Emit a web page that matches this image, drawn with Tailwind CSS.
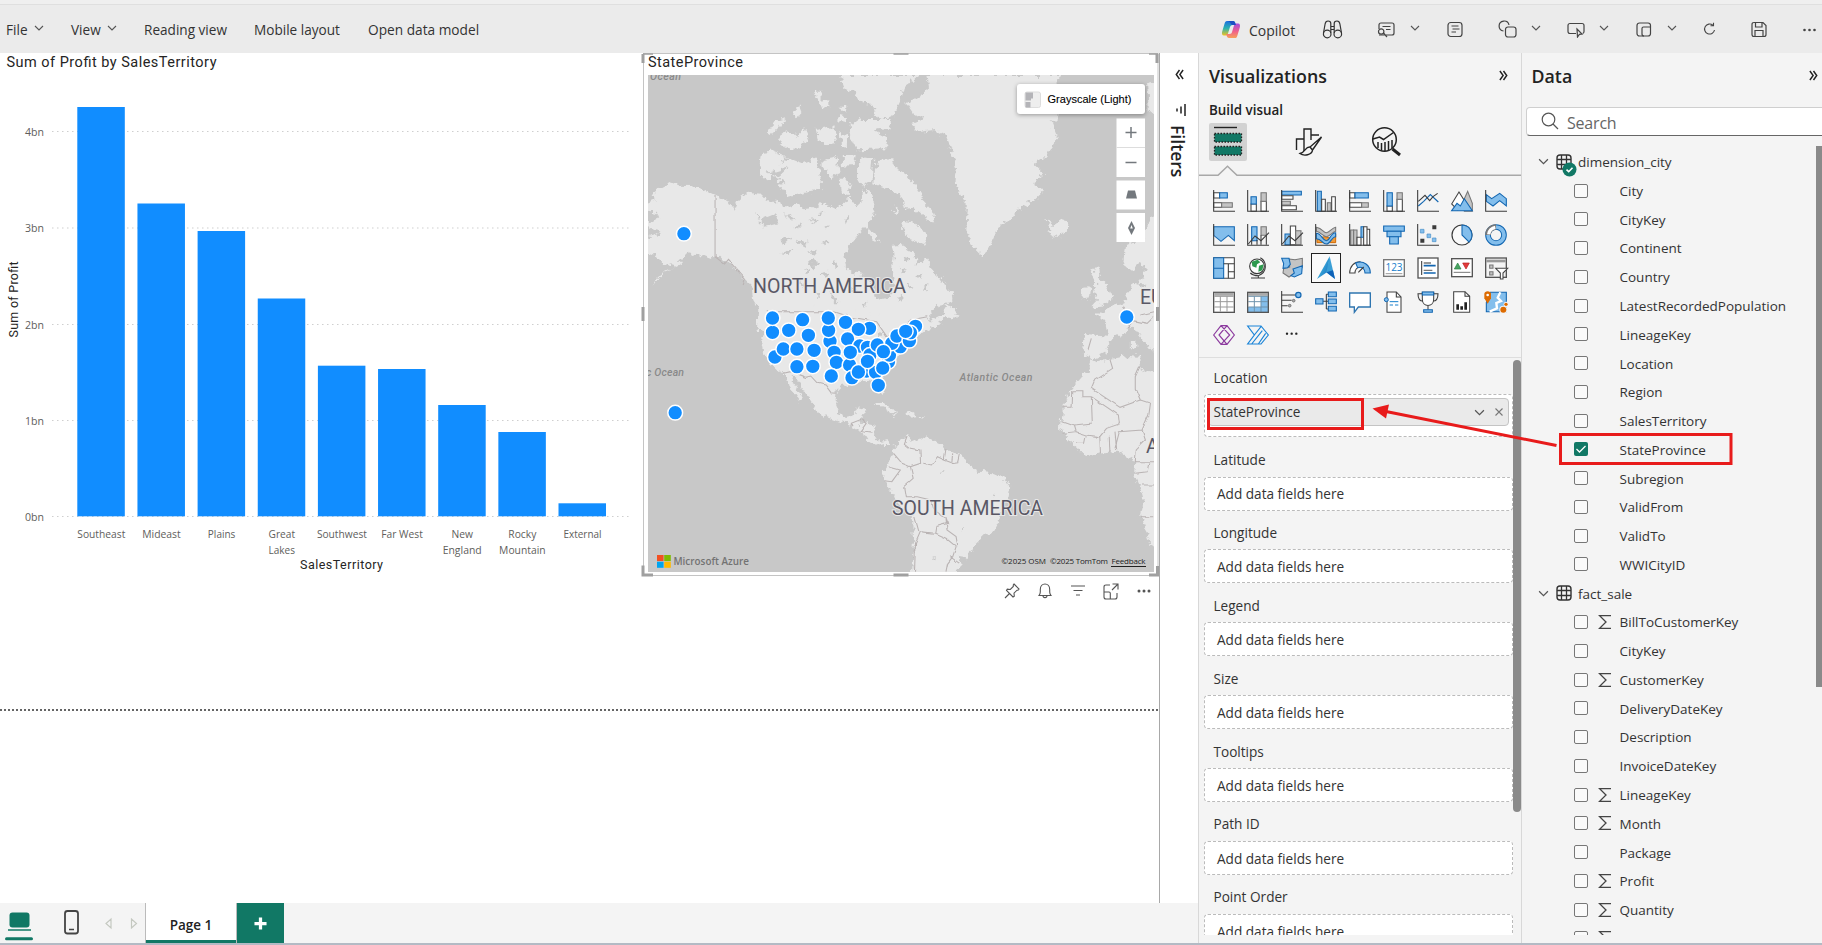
<!DOCTYPE html>
<html lang="en">
<head>
<meta charset="utf-8">
<title>Sales report</title>
<script src="https://cdn.jsdelivr.net/npm/@tailwindcss/browser@4"></script>
</head>
<body class="relative w-[1822px] h-[945px] overflow-hidden bg-white font-['Open_Sans','Noto_Sans',sans-serif] text-[13.6px] text-[#333] flex flex-col">

<!-- shared symbols -->
<svg class="hidden">
  <symbol id="chev" viewBox="0 0 10 10"><path d="M1 3l4 4 4-4" fill="none" stroke="#555" stroke-width="1.1"/></symbol>
  <symbol id="dbl" viewBox="0 0 10 12"><path d="M1 1l3.6 5L1 11M5 1l3.6 5L5 11" fill="none" stroke="#222" stroke-width="1.6"/></symbol>
  <symbol id="table" viewBox="0 0 16 16"><rect x="1" y="1" width="14" height="14" rx="3" fill="none" stroke="#333" stroke-width="1.4"/><path d="M5.5 1v14M10.5 1v14M1 5.5h14M1 10.5h14" stroke="#333" stroke-width="1.3"/></symbol>
  <symbol id="sigma" viewBox="0 0 14 16"><path d="M13 1.6H1.6L8 8l-6.400 6.400H13" fill="none" stroke="#444" stroke-width="1.3"/></symbol>
</svg>

<!-- toolbar -->
<header class="h-[53px] shrink-0 bg-[#ebebeb] flex flex-col">
  <div class="h-[5px] bg-[#efefef] border-b border-[#dfdfdf]"></div>
  <div class="flex-1 flex items-center pl-[6px] pt-[3px]">
    <div class="w-[65px] flex items-center gap-[6px]">File <svg class="size-[10px] -mt-[5px]"><use href="#chev"/></svg></div>
    <div class="w-[73px] flex items-center gap-[6px]">View <svg class="size-[10px] -mt-[5px]"><use href="#chev"/></svg></div>
    <div class="w-[110px]">Reading view</div>
    <div class="w-[114px]">Mobile layout</div>
    <div class="w-[130px] text-[13.7px]">Open data model</div>
    <div class="flex-1"></div>
    <div class="w-[601px] flex items-center">
      <svg class="w-[20px] h-[19px] -mt-[3px] shrink-0" viewBox="0 0 20 19">
        <defs><linearGradient id="ca" x1="0" y1="0" x2="0" y2="1"><stop offset="0" stop-color="#1a6fe0"/><stop offset=".5" stop-color="#2bb3b0"/><stop offset="1" stop-color="#f4c21c"/></linearGradient><linearGradient id="cb" x1="0" y1="0" x2="0" y2="1"><stop offset="0" stop-color="#a34be0"/><stop offset=".55" stop-color="#f0608a"/><stop offset="1" stop-color="#f7a05a"/></linearGradient></defs>
        <path d="M6 1h6c1.500 0 2 1 2.400 2.400L15 5H11.500C10 5 9.300 6 8.900 7.300L7 13.500C6.500 15 5.800 15.600 4.500 15.600H3C1 15.600.6 13.600 1.200 11.600L3.600 3.600C4.100 2 4.600 1 6 1z" fill="url(#ca)"/>
        <path d="M14 18H8c-1.500 0-2-1-2.400-2.400L5 14h3.500c1.500 0 2.200-1 2.600-2.300L13 5.500C13.500 4 14.200 3.400 15.500 3.400H17c2 0 2.400 2 1.800 4l-2.400 8C15.900 17 15.400 18 14 18z" fill="url(#cb)"/>
        <path d="M7 1h5c1.500 0 2 1 2.400 2.400L15 5H11.500C10 5 9.500 3 9 2.200z" fill="#1c4fc4"/>
      </svg>
      <span class="ml-[8px] w-[73px] text-[14px]">Copilot</span>
      <svg class="w-[21px] h-[19px] -mt-[3px] shrink-0" viewBox="0 0 20 19" fill="none" stroke="#333" stroke-width="1.200"><circle cx="4.700" cy="14" r="3.800"/><circle cx="15.300" cy="14" r="3.800"/><path d="M1 13L2.600 4C3 1.500 4 1 5.500 1S8.300 2 8.300 3.500V13M19 13L17.400 4C17 1.500 16 1 14.500 1S11.700 2 11.700 3.500V13M8.400 6.500h3.200M8.400 9.500h3.200"/></svg>
      <svg class="ml-[34px] w-[18px] h-[17px] -mt-[3px] shrink-0" viewBox="0 0 18 17" fill="none" stroke="#444" stroke-width="1.200"><path d="M2 8V4C2 2.800 2.800 2 4 2h11c1.200 0 2 .8 2 2v8c0 1.200-.8 2-2 2H9M5.500 5.500h8M9 8.500h4.500"/><circle cx="4.200" cy="10.500" r="2.700"/><path d="M2 14h6l-1.500-2 3.500 4"/></svg>
      <svg class="ml-[15px] size-[10px] -mt-[5px] shrink-0"><use href="#chev"/></svg>
      <svg class="ml-[27px] w-[16px] h-[17px] -mt-[3px] shrink-0" viewBox="0 0 16 17" fill="none" stroke="#444" stroke-width="1.200"><rect x="1" y="1.500" width="14" height="14" rx="2.800"/><path d="M4.500 5h7M5.500 8h7M4.500 11h4.500"/></svg>
      <svg class="ml-[35px] w-[19px] h-[18px] -mt-[3px] shrink-0" viewBox="0 0 19 18" fill="none" stroke="#444" stroke-width="1.200"><path d="M5.500 11A5 5 0 1 1 11 5"/><rect x="7.500" y="7" width="10.500" height="10" rx="2.500"/></svg>
      <svg class="ml-[14px] size-[10px] -mt-[5px] shrink-0"><use href="#chev"/></svg>
      <svg class="ml-[26px] w-[18px] h-[16px] -mt-[2px] shrink-0" viewBox="0 0 18 16" fill="none" stroke="#444" stroke-width="1.200"><path d="M9 11.500H3C1.800 11.500 1 10.800 1 9.500V3.500C1 2.300 1.800 1.500 3 1.500h12c1.300 0 2 .8 2 2v6c0 1-.5 1.700-1.300 2"/><path d="M10 7l5 5-2.600.4L10.500 15z"/></svg>
      <svg class="ml-[14px] size-[10px] -mt-[5px] shrink-0"><use href="#chev"/></svg>
      <svg class="ml-[27px] w-[16px] h-[15px] -mt-[3px] shrink-0" viewBox="0 0 16 15" fill="none" stroke="#444" stroke-width="1.200"><rect x="1" y="1" width="13.500" height="13" rx="2.500"/><path d="M14.500 5H7.500C6.500 5 6 5.500 6 6.500V12c0 1.300.7 2 2 2"/></svg>
      <svg class="ml-[15px] size-[10px] -mt-[5px] shrink-0"><use href="#chev"/></svg>
      <svg class="ml-[26px] w-[13px] h-[14px] -mt-[4px] shrink-0" viewBox="0 0 13 14" fill="none" stroke="#444" stroke-width="1.100"><path d="M11.500 8A5 5 0 1 1 9.800 3.200M10.500.8v3H7.500"/></svg>
      <svg class="ml-[35px] w-[16px] h-[17px] -mt-[3px] shrink-0" viewBox="0 0 16 17" fill="none" stroke="#444" stroke-width="1.200"><path d="M3 1.500h9l3 3v9c0 1.300-.7 2-2 2H3c-1.300 0-2-.7-2-2v-10c0-1.300.7-2 2-2zM4.500 1.500v4.500h6.500V1.500M4 15.500V9.500h8v6"/></svg>
      <svg class="ml-[35px] w-[15px] h-[4px] -mt-[2px] shrink-0" viewBox="0 0 15 4" fill="#444"><circle cx="2.500" cy="2" r="1.300"/><circle cx="7.500" cy="2" r="1.300"/><circle cx="12.500" cy="2" r="1.300"/></svg>
    </div>
  </div>
</header>

<div class="h-[890px] flex">
  <!-- report canvas, filters strip and page tabs -->
  <div class="w-[1198px] flex flex-col">
    <div class="h-[850px] flex">
      <main class="w-[1160px] border-r border-[#a8a8a8] flex flex-col">
        <div class="h-[656px] flex">
          <svg id="chart" class="w-[641px] h-[530px] shrink-0" viewBox="0 53 641 530"></svg>
          <section class="w-[518px] shrink-0">
            <svg id="map" class="w-[518px] h-[524px]" viewBox="641 53 518 524">
              <defs>
                <clipPath id="mapclip"><rect x="648" y="75" width="506" height="497"/></clipPath>
                <filter id="coast" x="0" y="0" width="100%" height="100%"><feTurbulence type="fractalNoise" baseFrequency="0.16" numOctaves="3" seed="4"/><feDisplacementMap in="SourceGraphic" scale="9" xChannelSelector="R" yChannelSelector="G"/></filter>
                <filter id="border" x="0" y="0" width="100%" height="100%"><feTurbulence type="fractalNoise" baseFrequency="0.1" numOctaves="2" seed="9"/><feDisplacementMap in="SourceGraphic" scale="3.500" xChannelSelector="R" yChannelSelector="G"/></filter>
              </defs>
              <rect x="641" y="53" width="518" height="524" fill="#fff"/>
              <rect x="648" y="75" width="506" height="497" fill="#c8c8c8"/>
              <g clip-path="url(#mapclip)">
                <g filter="url(#coast)">
                  <rect x="630" y="60" width="540" height="520" fill="#c8c8c8"/>
                  <g transform="translate(640 40) scale(.33807 .33333)" fill="#e8e8e8">
                    <!-- mainland, Alaska to James Bay and Labrador -->
                    <path d="M0 500L45 480 35 465 55 450 95 428 115 437 150 438 185 448 222 465 245 478 262 482 278 510 290 480 310 462 330 450 340 465 372 468 375 482 400 482 430 500 470 490 480 508 510 505 545 490 575 505 600 495 620 470 640 500 655 485 660 450 680 460 695 510 680 545 662 565 640 590 615 620 605 650 610 680 630 700 665 705 690 745 690 768 715 778 742 770 752 730 745 690 750 650 745 615 770 612 800 635 822 655 815 680 850 655 862 690 885 710 905 740 922 760 925 785 880 795 860 820 850 845 870 840 895 850 850 870 345 870 350 805 335 780 330 740 310 720 285 690 262 668 240 650 215 655 190 645 160 648 140 635 110 665 130 665 90 690 30 735 60 705 105 680 60 665 50 650 20 640 0 640V600L55 585 60 570 20 560V545L60 535 50 520 20 510z"/>
                    <!-- arctic archipelago -->
                    <path d="M590 105L830 105 780 140 770 180 750 225 720 240 695 225 690 195 655 190 640 160 605 145z"/>
                    <path d="M620 255L660 240 740 240 745 262 690 270 728 290 730 325 640 328 625 295zM375 275L400 240 430 232 415 260 390 285zM410 290L440 270 460 290 485 260 500 295 480 318 450 330 420 315zM520 270L575 262 580 310 545 318 525 295zM452 212L475 195 480 222 460 232zM515 155L540 155 540 180 560 190 560 205 535 200zM590 200L610 200 610 215zM590 225L612 230 610 250 590 245zM590 275L612 285 612 320 595 315z"/>
                    <path d="M358 335L390 332 432 350 410 380 375 425 352 400zM400 385L440 355 480 370 520 355 530 400 540 450 480 460 440 470 410 435 430 430 395 410zM540 360L585 350 590 400 565 415 540 380zM600 345L638 345 632 378 600 380zM590 425L605 410 625 440 620 465 595 460zM645 380L660 355 690 360 685 420 660 440 645 415z"/>
                    <path d="M700 360L745 358 755 385 790 405 830 460 830 480 875 525 870 550 840 530 810 505 780 500 770 460 730 445 690 430 695 390zM780 540L815 545 850 590 840 615 800 600 775 565zM670 560L700 590 710 605 680 590zM745 500L765 505 760 520 748 515z"/>
                    <!-- Greenland and Iceland -->
                    <path d="M850 105L1245 105 1225 140 1240 200 1235 240 1215 250 1235 300 1200 350 1165 370 1195 400 1160 430 1195 455 1170 480 1120 505 1095 540 1060 560 1035 620 1018 650 990 625 965 570 970 500 940 450 930 420 935 380 920 330 905 290 870 270 825 275 800 250 840 235 805 215 788 190 830 165 855 145z"/>
                    <path d="M1198 540L1225 555 1255 535 1272 562 1240 595 1205 580 1220 568z"/>
                    <!-- Europe -->
                    <path d="M1500 130L1540 120V240L1505 210zM1540 510L1505 540 1488 600 1435 612 1430 665 1450 695 1480 665 1495 690 1480 720 1450 745 1430 790 1380 800 1372 822 1348 820 1380 855 1388 890 1405 892 1430 878 1460 862 1480 890 1510 930 1540 935z"/>
                    <path d="M1345 678L1365 690 1355 710 1375 730 1398 775 1365 800 1335 802 1355 780 1340 755 1350 730 1335 705zM1308 745L1335 740 1330 775 1305 778z"/>
                    <g transform="translate(0 780)">
                      <path d="M338 0L350 25 375 35 370 60 362 90 362 130 368 160 385 190 410 212 425 220 435 245 450 270 470 300 482 303 475 280 455 250 442 228 458 232 480 260 495 290 515 315 520 335 550 350 580 362 610 370 630 380 650 392 668 405 680 425 700 437 720 432 740 432 745 445 735 422 715 428 702 418 692 400 697 375 672 370 652 372 655 350 668 328 645 322 632 345 610 348 590 340 578 310 582 275 600 255 630 250 660 240 690 245 705 270 718 285 722 270 714 245 722 220 745 195 770 160 792 140 812 115 840 95 855 85 850 60z"/>
                      <path d="M850 65L880 50 900 40 895 60 855 90zM905 15L925 20 940 45 925 55 895 50zM690 312L715 308 750 325 768 345 745 340 715 320zM782 340L800 335 818 348 790 352zM828 348L842 349 841 353 828 352zM745 346L762 350 750 354z"/>
                      <path d="M745 432L752 445 765 425 790 408 800 425 830 412 870 420 890 435 905 450 940 460 960 470 975 500 1000 515 1040 520 1075 535 1095 560 1090 590 1070 615 1065 650 1055 690 1020 705 990 735 975 760 965 775 940 770 948 790 935 835 802 835 808 780 810 720 808 660 780 630 760 600 740 570 718 540 722 510 735 490 750 460z"/>
                      <path d="M1315 102L1400 108 1388 130 1378 160 1345 177 1315 165 1310 130zM1335 178L1352 187 1400 175 1450 168 1477 170 1478 200 1500 215 1540 225V760L1510 735 1495 680 1482 640 1490 600 1480 560 1462 520 1465 480 1440 467 1410 455 1370 460 1320 465 1290 440 1260 410 1245 385 1250 340 1250 320 1275 270 1300 240 1330 205zM1452 118L1465 118 1465 145 1452 145z"/>
                    </g>
                  </g>
                  <!-- lakes and inlets -->
                  <g transform="translate(640 40) scale(.33807 .33333)" fill="#c8c8c8">
                    <path d="M350 540L400 520 410 550 370 560zM410 600L450 590 430 610zM415 640L455 625 440 645zM460 600L500 610 480 620zM720 520L745 470 760 500 730 540zM430 515L460 540 440 545zM500 660L530 670 510 690zM560 755L590 790 575 790zM380 398L440 380 410 410zM660 860L690 850 700 870 680 865zM700 880L715 875 705 900zM725 890L750 885 735 895zM1470 730L1500 735 1480 745z"/>
                    <path d="M340 515L350 530 345 535zM450 560L480 552 470 565zM505 530L520 545 510 548zM545 560L565 555 555 570zM535 600L560 610 545 618zM500 640L520 632 515 645zM485 680L500 700 490 702zM535 700L560 695 550 710zM575 660L590 680 578 684zM470 720L490 735 478 740zM520 740L530 770 522 770zM620 740L640 750 625 756zM655 790L670 785 665 800zM770 680L790 690 775 696zM790 730L810 745 795 748zM760 770L775 765 772 785zM840 740L850 735 848 755zM530 520L545 515 540 530zM600 540L620 530 612 548zM780 650L795 655 785 664zM820 710L835 700 830 716z"/>
                    <path d="M890 1290h6l2 8h-6zM1040 1365l8-4-2 10zM948 1470l8-3-3 8zM865 1550l8-2-4 10z"/>
                  </g>
                </g>
                <g filter="url(#border)">
                  <rect x="630" y="60" width="540" height="520" fill="none"/>
                  <g transform="translate(640 40) scale(.33807 .33333)" fill="none" stroke="#bab4b4" stroke-width="3.200">
                    <path d="M222 465V650L250 672 262 658 290 690 312 715 305 735"/>
                    <g transform="translate(0 780)">
                      <path d="M375 35H575L620 50 700 65 730 110 760 100 800 60 850 50M425 220L445 215 490 232 505 228 525 250 548 255 565 278 582 280M630 382L625 370 655 358 672 370 655 395 692 400"/>
                      <path d="M790 408L782 430 800 445 828 450 830 490 800 500 808 535 780 560 785 590 820 590 860 600 870 630 905 655 910 670 875 680 872 700 830 695 815 730 812 815M905 450L900 480 880 470 862 495 838 490M925 460L922 488 900 480M945 462L940 485 922 488M735 500L770 510 745 545 722 542M872 700L905 715 935 740 925 770 910 790 905 815M905 655L908 690 935 710 940 740M917 770L945 790M810 640L825 695M750 460L775 490 800 500"/>
                      <path d="M1390 178L1398 205 1345 240 1335 265 1420 322 1480 300 1465 265 1465 230 1478 200M1335 290L1338 372 1285 378 1250 365M1335 290H1310V272H1280L1278 322H1250M1335 290L1415 345 1418 372 1380 385 1360 410 1338 412M1480 300L1510 310 1505 345 1485 390 1418 395 1405 445M1285 378L1290 395 1250 400M1290 395L1320 405 1315 430 1290 430M1320 405L1360 410 1362 460M1388 410L1390 455M1405 395L1410 450M1485 390L1495 420 1465 450 1462 485H1521M1485 555H1521M1482 650H1521M1465 520L1500 515 1505 490M1335 115L1325 150M1440 85L1460 62 1500 70 1521 50M1460 62L1430 20M1480 45L1521 35"/>
                    </g>
                  </g>
                </g>
                <g font-family="Roboto, sans-serif" fill="#5a5866" stroke="#e8e8e8" stroke-width="2" paint-order="stroke" font-size="19.500">
                  <text x="753" y="292.500" textLength="153" lengthAdjust="spacingAndGlyphs">NORTH AMERICA</text>
                  <text x="892" y="514.500" textLength="151" lengthAdjust="spacingAndGlyphs">SOUTH AMERICA</text>
                  <text x="1140" y="303.500">EU</text>
                  <text x="1146" y="453">A</text>
                </g>
                <g font-family="Roboto, sans-serif" font-weight="500" font-style="italic" font-size="10.500" fill="#8a8a8a">
                  <text x="650" y="80" textLength="31">Ocean</text>
                  <text x="646" y="375.500" textLength="38">c Ocean</text>
                  <text x="959.500" y="380.500" textLength="73">Atlantic Ocean</text>
                </g>
                <g id="pins" fill="#118dff" stroke="#fff" stroke-width="1.500"></g>
              </g>
              <!-- attribution -->
              <path d="M657 555h6.600v6.100H657z" fill="#f25022"/><path d="M664.200 555h6.600v6.100h-6.600z" fill="#7fba00"/><path d="M657 561.700h6.600v6.100H657z" fill="#00a4ef"/><path d="M664.200 561.700h6.600v6.100h-6.600z" fill="#ffb900"/>
              <text x="673.500" y="565" font-size="11" font-weight="600" fill="#737373" textLength="75.500" lengthAdjust="spacingAndGlyphs">Microsoft Azure</text>
              <g font-size="8" fill="#222"><text x="1001.500" y="564" textLength="44.500">©2025 OSM</text><text x="1050" y="564" textLength="58">©2025 TomTom</text><text x="1111.500" y="564" textLength="34">Feedback</text></g>
              <path d="M1111 566.500h35" stroke="#222"/>
              <!-- map controls -->
              <g filter="drop-shadow(0 1px 2px rgb(0 0 0 / .35))"><rect x="1017" y="84" width="128" height="30" rx="3" fill="#fff"/></g>
              <rect x="1025" y="92" width="15.500" height="15.500" rx="2" fill="#eee" stroke="#ddd"/><path d="M1025.500 92.500h7.500v6h-2v2h-5.500zM1025.500 102h5v5.500h-5z" fill="#b4b4b8"/>
              <text x="1047.500" y="103" font-family="'Liberation Sans', sans-serif" font-size="11" fill="#000" stroke="#000" stroke-width=".1" textLength="84">Grayscale (Light)</text>
              <g fill="#fff"><path d="M1116.500 118.500h28.500v58.500h-28.500zM1116.500 180.500h28.500v29h-28.500zM1116.500 213h28.500v29h-28.500z"/></g>
              <path d="M1116.500 147.500h28.500" stroke="#ddd"/>
              <path d="M1125.500 132.500h11M1131 127v11M1125.500 162.500h11" stroke="#73787d" stroke-width="1.500"/>
              <path d="M1128 190.500h7l2 8h-11z" fill="#73787d"/><path d="M1131.500 221l3.500 7-3.500 7-3.500-7z" fill="#73787d"/><path d="M1131.500 225l1.300 3.500h-2.600z" fill="#fff"/>
              <text x="648" y="66.800" font-family="Roboto, sans-serif" font-size="14.500" fill="#252423" textLength="95">StateProvince</text>
              <!-- selection frame -->
              <rect x="643.500" y="53.500" width="514.500" height="522" fill="none" stroke="#c4c4c4" stroke-width="1"/>
              <path d="M653 54h-10M1149 54h9M893.500 54h15" stroke="#a0a0a0" stroke-width="1.500"/>
              <path d="M643 54v9M1157 54v9M653 575h-10v-9.500M1149 575h8.500v-9M893.500 575h15M643 307v14M1157.500 307v14" fill="none" stroke="#a0a0a0" stroke-width="3"/>
            </svg>
            <div class="flex items-center justify-end gap-[15px] h-[28px] pr-[6px]">
              <svg class="size-[18px]" viewBox="0 0 18 18" fill="none" stroke="#555" stroke-width="1.100"><path d="M11 2l5 5-1 1.200-1 0-3 3 .3 3-1.300.8L3.500 8.500l.8-1.300 3 .3 3-3V3zM6.500 11.500L2 16"/></svg>
              <svg class="size-[18px]" viewBox="0 0 18 18" fill="none" stroke="#555" stroke-width="1.100"><path d="M3 13.500h12c-1-1.300-1.300-2-1.300-3.500V7.500C13.700 4 11.500 2 9 2S4.300 4 4.300 7.500V10c0 1.500-.3 2.200-1.300 3.500zM7 13.500c0 2.800 4 2.800 4 0"/></svg>
              <svg class="size-[18px]" viewBox="0 0 18 18" fill="none" stroke="#555" stroke-width="1.200"><path d="M2 4h14M4.500 8.500h9M7 13h4"/></svg>
              <svg class="size-[18px]" viewBox="0 0 18 18" fill="none" stroke="#555" stroke-width="1.100"><path d="M8 3H4C2.700 3 2 3.700 2 5v10c0 1.300.7 2 2 2h9c1.300 0 2-.7 2-2v-4M2 10h5c.8 0 1.300.5 1.300 1.300V17M10.500 2H16v5.500M16 2l-6 6"/></svg>
              <svg class="size-[18px]" viewBox="0 0 18 18" fill="#555"><circle cx="4" cy="9" r="1.500"/><circle cx="9" cy="9" r="1.500"/><circle cx="14" cy="9" r="1.500"/></svg>
            </div>
          </section>
        </div>
        <div class="h-[2px] w-full"><svg class="w-full h-[2px]"><path d="M0 1H1160" stroke="#333" stroke-width="1.500" stroke-dasharray="2 2"/></svg></div>
      </main>
      <aside class="flex-1 flex flex-col items-center pt-[16px]">
        <svg class="w-[9px] h-[11px] rotate-180"><use href="#dbl"/></svg>
        <svg class="mt-[24px] ml-[4px] w-[12px] h-[12px]" viewBox="0 0 12 12"><path d="M10 0v12M6 2.500v7M2 4.500v3" stroke="#222" stroke-width="1.500"/></svg>
        <div class="mt-[9px] -ml-[3px] [writing-mode:vertical-rl] text-[17.600px] leading-none font-semibold text-[#222]">Filters</div>
      </aside>
    </div>
    <footer class="h-[40px] bg-[#f4f4f4] flex">
      <div class="w-[145px] flex items-start">
        <svg class="ml-[4px] w-[30px] h-[40px]" viewBox="4 903 30 40"><rect x="9.500" y="912.500" width="20" height="15" rx="3" fill="#117865"/><path d="M8 930h23" stroke="#117865" stroke-width="1.500"/><path d="M6.500 938.700h25" stroke="#117865" stroke-width="3" stroke-linecap="round"/></svg>
        <svg class="ml-[29px] w-[18px] h-[40px]" viewBox="63 903 18 40" fill="none" stroke="#444"><rect x="65" y="911" width="13" height="22.500" rx="2.500" stroke-width="1.800"/><path d="M69 929.500h5" stroke-width="1.500"/></svg>
        <svg class="ml-[22px] w-[38px] h-[40px]" viewBox="103 903 38 40" fill="none" stroke="#c4c8c0" stroke-width="1.200"><path d="M111 919v9l-5-4.500zM131.500 919v9l5-4.500z"/></svg>
      </div>
      <div class="w-[92px] bg-white border-x border-[#bbb] flex flex-col"><div class="flex-1 flex items-center justify-center pt-[8px] font-semibold text-[13.500px] text-[#222]">Page 1</div><div class="h-[3px] bg-[#117865]"></div></div>
      <div class="w-[47px] bg-[#117865] flex items-center justify-center"><svg class="size-[13px]" viewBox="0 0 14 14"><path d="M7 0.500v13M.5 7h13" stroke="#fff" stroke-width="3.500"/></svg></div>
    </footer>
  </div>

  <!-- visualizations pane -->
  <aside class="w-[323px] bg-[#f4f4f4] border-l border-[#d8d8d8] flex flex-col">
    <div class="h-[46px] flex items-center pl-[10px] pr-[13px] justify-between text-[17.800px] font-semibold text-[#222]"><span>Visualizations</span><svg class="w-[9px] h-[11px] -mt-px"><use href="#dbl"/></svg></div>
    <div class="h-[24px] pl-[10px] flex items-center leading-none font-semibold text-[13.400px] pb-px text-[#222]">Build visual</div>
    <svg class="w-[322px] h-[53px]" viewBox="1199 123 322 53">
      <rect x="1209" y="123" width="38" height="38" rx="2" fill="#d2d2d2"/>
      <path d="M1214 127.500h23" stroke="#222" stroke-width="1.400"/>
      <g fill="#117865" stroke="#222" stroke-width="1.300" stroke-dasharray="1.500 1.500"><rect x="1214.500" y="133.500" width="27" height="8.500"/><rect x="1214.500" y="146.500" width="27" height="8.500"/></g>
      <g fill="none" stroke="#222" stroke-width="1.400"><path d="M1296.500 150v-11h7.500v12M1304 139v-10h7v11M1311 135h8M1311 135v4"/><path d="M1321.500 137l-11.500 10 2.500 3 9-13zM1310 147c-5-.5-4 5-10 6.500 4 3 12 1.500 12.500-3.500" fill="#f4f4f4"/></g>
      <g fill="none" stroke="#222" stroke-width="1.500"><circle cx="1384.500" cy="139.500" r="11.800"/><path d="M1392.500 149l7.500 6" stroke-width="3"/><path d="M1373 139l6.500-2 4 2.500 10-7M1378 148v-6M1381.500 150v-7M1385 151v-9M1388.500 150v-9M1392 148v-8"/></g>
      <path d="M1199 175.300h19l9.500-9 9.500 9h284" fill="none" stroke="#a8a8a8" stroke-width="1.500"/>
    </svg>
    <div id="gallery" class="h-[182px] border-b border-[#dedede] pl-[7.500px] pt-[8.500px] grid grid-cols-[repeat(9,34px)] auto-rows-[33.500px] content-start"></div>
    <div class="h-[577px] flex">
      <div id="wells" class="w-[314px] overflow-hidden pl-[5px]">
        <div class="h-[36px] pl-[9.500px] pt-[10px]">Location</div>
        <div class="h-[43px] w-[309px] bg-white border border-dashed border-[#bbb] rounded-sm p-[3px] mb-[3px]">
          <div class="h-[28px] bg-[#eaeaea] border border-[#c4c4c4] rounded-sm flex items-center pl-[4.500px] pr-[4px]"><span class="flex-1">StateProvince</span><svg class="size-[11px] mr-[9px]"><use href="#chev"/></svg><svg class="size-[10px]" viewBox="0 0 10 10"><path d="M1.500 1.500l7 7M8.500 1.500l-7 7" stroke="#777" stroke-width="1.100"/></svg></div>
        </div>
      </div>
      <div class="w-[8px] pt-[2px]"><div class="h-[452px] w-[8px] rounded-full bg-[#8a8a8a]"></div></div>
    </div>
  </aside>

  <!-- data pane -->
  <aside class="w-[301px] bg-[#f4f4f4] border-l border-[#d8d8d8] flex flex-col overflow-hidden">
    <div class="h-[46px] flex items-center pl-[9.500px] pr-[4px] justify-between text-[17.800px] font-semibold text-[#222]"><span>Data</span><svg class="w-[9px] h-[11px] -mt-px"><use href="#dbl"/></svg></div>
    <div class="mt-[8px] ml-[4px] h-[29px] w-[310px] shrink-0 bg-white border border-[#cfcfcf] border-b-[#666] rounded-[4px] flex items-center pl-[14px] text-[16px] text-[#666]"><svg class="size-[18px] mr-[8px]" viewBox="0 0 18 18" fill="none" stroke="#555" stroke-width="1.200"><circle cx="7.500" cy="7.500" r="6.300"/><path d="M12 12l5 5"/></svg><span class="tracking-[-0.2px] pt-[3px]">Search</span></div>
    <div class="h-[799px] mt-[10px] flex overflow-hidden">
      <div id="fields" class="w-[294px] h-[789px] pt-[2px] overflow-hidden text-[#333] text-[13.500px]"></div>
      <div class="w-[6px] h-[541px] bg-[#8a8a8a]"></div>
    </div>
  </aside>
</div>
<div class="h-[2px] bg-[#b3bac4]"></div>

<!-- callouts drawn over the panes -->
<svg class="absolute left-0 top-0 w-[1822px] h-[945px] pointer-events-none" viewBox="0 0 1822 945">
  <g fill="none" stroke="#e81b1b" stroke-width="3"><rect x="1208.500" y="399.500" width="154" height="29"/><rect x="1560.500" y="434.500" width="170.500" height="29"/><path d="M1556.500 445.500L1386 411.500"/></g>
  <path d="M1372.500 408.500l16.500-4-3 14z" fill="#e81b1b"/>
</svg>

<script>
const chart = document.getElementById('chart');
let c = '';
[['4bn',131.5],['3bn',228],['2bn',324.500],['1bn',420.500],['0bn',516.500]].forEach(([t,y]) => {
  c += `<path d="M52 ${y}H629" stroke="#cfcfcf" stroke-width="1" stroke-dasharray="1.500 3.500"/><text x="25" y="${y+4}" font-size="11" fill="#605e5c" textLength="19" lengthAdjust="spacingAndGlyphs">${t}</text>`;
});
[[107,[['Southeast',48]]],[203.500,[['Mideast',38.5]]],[231,[['Plains',27.5]]],[298.500,[['Great',26.5],['Lakes',26.5]]],[365.700,[['Southwest',50]]],[369,[['Far West',41.5]]],[405,[['New',21.5],['England',39]]],[432,[['Rocky',28],['Mountain',46.5]]],[503.300,[['External',38]]]].forEach(([y,lines],i) => {
  const x = 77.300 + i*60.150;
  c += `<rect x="${x}" y="${y}" width="47.500" height="${516.300-y}" fill="#118dff"/>`;
  lines.forEach(([t,w],j) => c += `<text x="${x+24-w/2}" y="${538+j*16}" font-size="11" fill="#605e5c" textLength="${w}" lengthAdjust="spacingAndGlyphs">${t}</text>`);
});
c += `<g font-family="Roboto, sans-serif" fill="#252423"><text x="6.500" y="66.800" font-size="14.500" textLength="210">Sum of Profit by SalesTerritory</text><text x="300" y="568.500" font-size="12.500" textLength="83">SalesTerritory</text><text transform="translate(18 337.500) rotate(-90)" font-size="12.500" textLength="76">Sum of Profit</text></g>`;
chart.innerHTML = c;

document.getElementById('pins').innerHTML = [[130,-199],[104,338],[1440,51],[392,97],[392,54],[440,91],[481,59],[498,106],[399,171],[424,147],[464,147],[464,200],[511,199],[515,151],[562,124],[558,91],[557,54],[574,157],[581,187],[566,228],[608,67],[679,85],[646,88],[614,117],[650,138],[620,195],[622,157],[673,142],[627,233],[670,213],[646,216],[680,165],[697,217],[735,185],[718,204],[705,256],[673,184],[702,135],[738,165],[770,140],[745,130],[720,155],[760,108],[797,122],[815,79],[800,98],[786,94]]
  .map(([x,y]) => `<circle cx="${(640+x/2.958).toFixed(1)}" cy="${(300+y/3).toFixed(1)}" r="7.400"/>`).join('');

// gallery icons, each on a 66-unit square
const B = d => `<path d="${d}" fill="#83beec" stroke="#1266b1" stroke-width="3.200"/>`;
const G = d => `<path d="${d}" fill="#c4c4c4" stroke="#777" stroke-width="3.200"/>`;
const W = d => `<path d="${d}" fill="#fff" stroke="#444" stroke-width="3.200"/>`;
const K = d => `<path d="${d}" fill="none" stroke="#3b3b3b" stroke-width="3.200"/>`;
const L = d => `<path d="${d}" fill="none" stroke="#1266b1" stroke-width="3.500"/>`;
const A = K('M2 0V64H66');
const icons = [
  W('M2 8H20V24H2z')+B('M20 8H43V24H20z')+W('M2 38H26V52H2z')+G('M26 38H58V52H26z')+A,
  W('M12 42H28V64H12z')+B('M12 20H28V42H12z')+W('M42 34H58V64H42z')+G('M42 8H58V34H42z')+A,
  B('M2 4H61V15H2z')+W('M2 17H36V28H2z')+G('M2 34H28V45H2z')+W('M2 47H46V59H2z')+A,
  B('M7 4H19V64H7z')+W('M20 28H31V64H20z')+G('M37 38H48V64H37z')+W('M50 20H61V64H50z')+A,
  W('M2 8H18V24H2z')+B('M18 8H58V24H18z')+W('M2 38H38V52H2z')+G('M38 38H58V52H38z')+A,
  W('M12 48H28V64H12z')+B('M12 8H28V48H12z')+W('M42 28H58V64H42z')+G('M42 8H58V28H42z')+A,
  L('M4 48L20 34 40 14 64 36')+K('M4 34L24 16 38 32 48 20 62 10')+A,
  G('M34 40L50 4 64 40V64H40z')+W('M2 42L24 6 44 38 20 60z')+B('M2 62L18 40 28 48 40 26 64 62z'),
  B('M4 14L20 26 44 10 64 26V48L44 32 24 48 4 34z')+A,
  B('M2 8H64V50L46 34 24 52 2 34z')+A,
  B('M14 8H30V50H14z')+G('M42 8H58V34H42z')+K('M14 62V48M30 62V48M42 62V34M58 62V34')+K('M4 60L24 36 42 50 66 26')+A,
  B('M12 30H28V62H12z')+W('M28 6H44V62H28z')+G('M44 20H60V62H44z')+K('M4 60L24 36 42 50 66 26')+A,
  '<path d="M6 56H62V30L44 42 30 38 6 42z" fill="#f09a3a" stroke="#d26a00" stroke-width="3"/>'+G('M4 10C24 14 24 26 34 26S50 12 62 10V22C50 26 44 38 34 38S18 24 4 22z')+B('M4 28C20 28 22 50 34 50S46 26 62 26V38C50 38 46 60 34 60S20 44 4 44z')+A,
  G('M5 18H14V64H5z')+G('M14 18H24V64H14z')+W('M24 40H36V64H24z')+B('M36 8H44V40H36z')+W('M44 8H54V64H44zM54 16H62V64H54z')+A,
  B('M2 6H64V22H2z')+B('M12 22H54V38H12z')+B('M20 38H46V60H20z'),
  '<path d="M46 4h12v12H46zM10 44h12v12H10z" fill="#3b3b3b"/><path d="M10 16h11v11H10zM30 30h11v11H30zM46 42h11v11H46z" fill="#83beec" stroke="#4a90c8" stroke-width="2"/>'+A,
  '<circle cx="33" cy="33" r="30" fill="#fafafa" stroke="#3b3b3b" stroke-width="3.500"/>'+B('M33 3A30 30 0 0 1 54 54L33 33z'),
  '<circle cx="33" cy="33" r="24" fill="none" stroke="#1266b1" stroke-width="17"/><circle cx="33" cy="33" r="24" fill="none" stroke="#83beec" stroke-width="11"/><path d="M9 33A24 24 0 0 1 33 9" fill="none" stroke="#777" stroke-width="17"/><path d="M11 31A24 24 0 0 1 31 10" fill="none" stroke="#fff" stroke-width="10"/>',
  W('M2 2H64V64H2z')+B('M2 2H32V34H2zM2 34H32V64H2z')+K('M32 20H64M46 20V64M46 44H64'),
  '<circle cx="30" cy="28" r="22" fill="#fff" stroke="#3b3b3b" stroke-width="3.500"/><path d="M14 14l18-6 8 8-10 6-2 10-12-4zM36 26l14-4-4 18-12 4z" fill="#2e9a4e"/>'+K('M40 2C62 14 60 48 34 56M10 48C18 56 26 56 34 56V62M12 63H54'),
  G('M24 6L42 8 64 4V30L46 46 24 60 6 48 8 34 26 30z')+B('M2 4H24L28 22 20 32 6 34 8 20zM36 36L64 26 62 50 40 60 30 56 40 48z'),
  '<defs><linearGradient id="az" x1="0" x2="1" y1="0" y2=".8"><stop offset=".35" stop-color="#3fb0dc"/><stop offset="1" stop-color="#1670c0"/></linearGradient></defs><path d="M44-2L6 66 38 44z" fill="url(#az)"/><path d="M44-2L60 66 34 46z" fill="#3a9fd6"/><path d="M34 46L60 66 54 40z" fill="#0f62b8"/>',
  W('M2 48C2 28 16 14 33 14V30C24 30 18 38 18 48z')+B('M20 18C44 8 64 26 64 48H48C48 36 40 28 26 32z')+K('M28 46L44 30'),
  '<rect x="2" y="8" width="62" height="50" fill="#fff" stroke="#777" stroke-width="4"/><text x="33" y="43" text-anchor="middle" font-size="30" fill="#1880cc">123</text><path d="M8 50H58" stroke="#999" stroke-width="3"/>',
  '<rect x="3" y="3" width="60" height="60" fill="#fff" stroke="#555" stroke-width="4"/>'+K('M14 12V54')+'<path d="M20 18H42M20 40H46" stroke="#777" stroke-width="4"/><path d="M20 26H56M20 48H56" stroke="#1266b1" stroke-width="5"/>',
  '<rect x="2" y="5" width="62" height="54" fill="#fff" stroke="#555" stroke-width="4"/><path d="M10 36L20 18 30 36z" fill="#4aa564" stroke="#26803e" stroke-width="2"/><path d="M35 18H55L45 36z" fill="#e23b3b" stroke="#b81f1f" stroke-width="2"/><path d="M8 46H58" stroke="#777" stroke-width="3"/>',
  '<rect x="2" y="3" width="62" height="58" fill="#f4f4f4" stroke="#555" stroke-width="4"/><path d="M4 12H62" stroke="#999" stroke-width="8"/>'+G('M14 24H24V34H14zM14 44H24V54H14z')+W('M32 34H68L54 48V66H46V48z'),
  '<rect x="2" y="4" width="62" height="60" fill="#fff" stroke="#555" stroke-width="4"/><path d="M4 10H62" stroke="#aaa" stroke-width="9"/><path d="M4 16H62M4 32H62M4 48H62M22 16V62M42 16V62" stroke="#999" stroke-width="3"/>',
  '<rect x="2" y="4" width="62" height="60" fill="#fff"/><path d="M42 16H64V64H2V48H42z" fill="#83beec"/><path d="M4 10H62" stroke="#aaa" stroke-width="9"/><path d="M4 16H62M4 32H62M4 48H62M22 16V62M42 16V62" stroke="#6f93ad" stroke-width="3"/><rect x="2" y="4" width="62" height="60" fill="none" stroke="#555" stroke-width="4"/>',
  K('M2 12H46M2 28H32M2 44H20')+'<circle cx="52" cy="12" r="8" fill="#83beec" stroke="#1266b1" stroke-width="3.500"/><circle cx="38" cy="29" r="4" fill="#aaa" stroke="#777" stroke-width="3"/><circle cx="26" cy="44" r="4" fill="#aaa" stroke="#777" stroke-width="3"/>'+A,
  K('M22 31H40M34 10V54M34 10H42M34 54H42')+B('M2 23H24V39H2zM40 3H64V17H40zM40 24H64V38H40zM40 46H64V60H40z'),
  '<path d="M2 6H64V48H28L16 64V48H2z" fill="#fff" stroke="#2e75b0" stroke-width="4"/>',
  W('M12 3H40L54 18V64H12z')+K('M40 3V18H54')+'<circle cx="10" cy="26" r="6" fill="#83beec" stroke="#1266b1" stroke-width="3"/><path d="M20 32H46M20 42H30M36 42H46" stroke="#1880cc" stroke-width="3"/>',
  W('M16 4H50V24C50 50 16 50 16 24zM33 44V56')+K('M16 8H3C3 26 10 30 18 30M50 8H63C63 26 56 30 48 30')+B('M16 3H50V12H16zM20 56H46V64H20z'),
  W('M8 2H42L56 16V64H8z')+K('M42 2V16H56')+'<path d="M16 40h8v16h-8zM28 46h8v10h-8zM40 34h8v22h-8z" fill="#222"/>',
  B('M16 4H64V62H4V34z')+'<path d="M46 4L38 20 48 30 34 36 36 52 14 62" fill="none" stroke="#fff" stroke-width="7"/><path d="M-2 8C-2-2 18-2 18 8V22L8 38-2 22z" fill="#dd6b00"/><circle cx="8" cy="12" r="4" fill="#fff"/><circle cx="55" cy="56" r="12" fill="#f4f4f4"/><circle cx="64" cy="40" r="8" fill="#f4f4f4"/><circle cx="55" cy="56" r="9" fill="#dd6b00"/><circle cx="63" cy="40" r="5" fill="#dd6b00"/>',
  '<path d="M2 33L24 5H42L64 33 42 61H24zM24 5L50 33 24 61M42 5L18 33 42 61" fill="none" stroke="#8c3a9e" stroke-width="3.500"/>',
  '<path d="M2 6H42L64 33 42 60H2L22 33zM22 33L42 8M14 60L46 20M34 60L56 28" fill="none" stroke="#1a84d8" stroke-width="3.500"/>',
  '<g fill="#222"><circle cx="18" cy="29" r="3.500"/><circle cx="32" cy="29" r="3.500"/><circle cx="46" cy="29" r="3.500"/></g>'
];
document.getElementById('gallery').innerHTML = icons.map((s,i) =>
  `<div class="flex items-center justify-center"><div class="${i===21 ? 'size-[30px] shrink-0 border border-[#222] bg-[#fafafa] flex items-center justify-center' : 'size-[30px] flex items-center justify-center'}"><svg class="size-[22px] overflow-visible" viewBox="0 0 66 66">${s}</svg></div></div>`).join('');

document.getElementById('wells').insertAdjacentHTML('beforeend', ['Latitude','Longitude','Legend','Size','Tooltips','Path ID','Point Order'].map(t =>
  `<div class="h-[72.900px]"><div class="h-[36.500px] pl-[9.500px] pt-[10px]">${t}</div><div class="h-[34px] w-[309px] bg-white border border-dashed border-[#bbb] rounded-sm flex items-center pl-[12px] pt-[2px]">Add data fields here</div></div>`).join(''));

const group = (t, ok) => `<div class="h-[28.780px] flex items-center"><svg class="ml-[16px] mr-[7px] size-[11px] -mt-px"><use href="#chev"/></svg><div class="relative size-[16px] mr-[6px] -mt-px"><svg class="size-[16px]"><use href="#table"/></svg>${ok ? '<svg class="absolute left-[6px] top-[8px] size-[15px]" viewBox="0 0 15 15"><circle cx="7.500" cy="7.500" r="7" fill="#117865"/><path d="M4.500 7.700l2.200 2 3.800-4" fill="none" stroke="#fff" stroke-width="1.600"/></svg>' : ''}</div>${t}</div>`;
const field = t => {
  const sum = t[0] === '+', on = t === 'StateProvince';
  return `<div class="h-[28.780px] flex items-center"><div class="ml-[52px] size-[14px] shrink-0 rounded-[2px] -mt-px ${on ? 'bg-[#117865]' : 'border border-[#777] bg-[#fafafa]'}">${on ? '<svg class="size-[14px]" viewBox="0 0 14 14"><path d="M2.500 7l3 3 6-6" fill="none" stroke="#fff" stroke-width="1.300"/></svg>' : ''}</div><div class="w-[31.500px] shrink-0 pl-[10px] -mt-px">${sum ? '<svg class="w-[14px] h-[16px]"><use href="#sigma"/></svg>' : ''}</div>${t.replace('+','')}</div>`;
};
document.getElementById('fields').innerHTML = group('dimension_city', true)
  + ['City','CityKey','Continent','Country','LatestRecordedPopulation','LineageKey','Location','Region','SalesTerritory','StateProvince','Subregion','ValidFrom','ValidTo','WWICityID'].map(field).join('')
  + group('fact_sale', false)
  + ['+BillToCustomerKey','CityKey','+CustomerKey','DeliveryDateKey','Description','InvoiceDateKey','+LineageKey','+Month','Package','+Profit','+Quantity','+'].map(field).join('');
</script>
</body>
</html>
